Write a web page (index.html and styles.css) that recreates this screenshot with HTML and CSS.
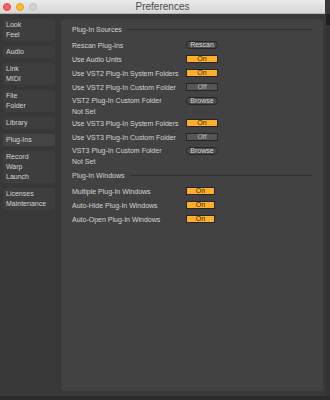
FILE: index.html
```html
<!DOCTYPE html>
<html lang="en">
<head>
<meta charset="UTF-8">
<title>Preferences</title>
<link rel="stylesheet" href="styles.css">
</head>
<body>
<div class="window">
    <div class="titlebar">
        <div class="lights">
            <span class="light red"></span>
            <span class="light yellow"></span>
            <span class="light off"></span>
        </div>
        <div class="title">Preferences</div>
    </div>
    <div class="content">
        <div class="sidebar">
            <div class="tab">Look<br>Feel</div>
            <div class="tab">Audio</div>
            <div class="tab">Link<br>MIDI</div>
            <div class="tab">File<br>Folder</div>
            <div class="tab">Library</div>
            <div class="tab active">Plug-Ins</div>
            <div class="tab">Record<br>Warp<br>Launch</div>
            <div class="tab">Licenses<br>Maintenance</div>
        </div>
        <div class="panel">
            <div class="section-head"><span>Plug-In Sources</span><i class="rule"></i></div>
            <div class="row"><span>Rescan Plug-Ins</span><button class="btn pill">Rescan</button></div>
            <div class="row"><span>Use Audio Units</span><button class="btn on">On</button></div>
            <div class="row"><span>Use VST2 Plug-In System Folders</span><button class="btn on">On</button></div>
            <div class="row"><span>Use VST2 Plug-In Custom Folder</span><button class="btn off">Off</button></div>
            <div class="row short"><span>VST2 Plug-In Custom Folder</span><button class="btn pill">Browse</button></div>
            <div class="note">Not Set</div>
            <div class="row"><span>Use VST3 Plug-In System Folders</span><button class="btn on">On</button></div>
            <div class="row"><span>Use VST3 Plug-In Custom Folder</span><button class="btn off">Off</button></div>
            <div class="row short"><span>VST3 Plug-In Custom Folder</span><button class="btn pill">Browse</button></div>
            <div class="note">Not Set</div>
            <div class="section-head"><span>Plug-In Windows</span><i class="rule"></i></div>
            <div class="row"><span>Multiple Plug-In Windows</span><button class="btn on narrow">On</button></div>
            <div class="row"><span>Auto-Hide Plug-In Windows</span><button class="btn on narrow">On</button></div>
            <div class="row"><span>Auto-Open Plug-In Windows</span><button class="btn on narrow">On</button></div>
        </div>
        <div class="scroll"><div class="thumb"></div></div>
    </div>
</div>
</body>
</html>
```

FILE: styles.css
```css
body {
    margin: 0;
    background-color: #2b2b2b;
    font-family: "Liberation Sans", Arial, sans-serif;
    font-size: 7px;
    color: #d4d4d4;
}
.window {
    width: 330px;
    height: 396px;
    display: flex;
    flex-direction: column;
    background-color: #383838;
}
.titlebar {
    width: 325px;
    height: 14px;
    box-sizing: border-box;
    display: flex;
    align-items: center;
    background: linear-gradient(#ebebeb, #d6d6d6);
    border-bottom: 1px solid #b4b4b4;
    position: relative;
}
.lights {
    display: flex;
    gap: 5px;
    padding-left: 3px;
}
.light {
    width: 8px;
    height: 8px;
    border-radius: 50%;
    box-sizing: border-box;
}
.red { background-color: #fc5f57; border: 1px solid #e0443e; }
.yellow { background-color: #fdbc2e; border: 1px solid #dea123; }
.off { background-color: #d3d3d3; border: 1px solid #c2c2c2; }
.title {
    position: absolute;
    left: 0;
    right: 0;
    text-align: center;
    font-family: "Liberation Sans", Arial, sans-serif;
    font-size: 10px;
    color: #4a4a4a;
}
.content {
    flex: 1;
    display: flex;
}
.sidebar {
    width: 61px;
    padding: 5px 0 0 3px;
    box-sizing: border-box;
    display: flex;
    flex-direction: column;
    gap: 5px;
}
.tab {
    width: 52px;
    padding: 1px 0 1px 3px;
    box-sizing: border-box;
    line-height: 10px;
    background-color: #3e3e3e;
    border-radius: 3px;
}
.tab.active {
    background-color: #454545;
}
.panel {
    width: 262px;
    margin: 5px 0 5px 0;
    padding: 5px 10px 0 11px;
    box-sizing: border-box;
    background-color: #424242;
    border-radius: 4px;
}
.section-head {
    display: flex;
    align-items: center;
    gap: 5px;
    height: 10px;
    margin-bottom: 4px;
}
.row + .section-head,
.note + .section-head {
    margin-top: 4px;
}
.rule {
    flex: 1;
    height: 1px;
    background-color: #323232;
}
.row {
    display: grid;
    grid-template-columns: 114px auto;
    align-items: center;
    height: 14px;
}
.row.short {
    height: 13px;
}
.note {
    height: 9px;
    line-height: 9px;
}
.btn {
    width: 32px;
    height: 8px;
    padding: 0;
    box-sizing: border-box;
    font-family: "Liberation Sans", Arial, sans-serif;
    font-size: 7px;
    line-height: 6px;
    text-align: center;
    border: 1px solid #262626;
}
.btn.pill {
    background-color: #4c4c4c;
    color: #d6d6d6;
    border-radius: 4px;
}
.btn.on {
    background-color: #ffae2b;
    color: #2a2a2a;
}
.btn.off {
    background-color: #555555;
    color: #b8b8b8;
}
.btn.narrow {
    width: 29px;
}
.scroll {
    width: 4px;
    margin-left: 3px;
    background-color: #333333;
}
.thumb {
    height: 11px;
    background-color: #1e1e1e;
}
```
